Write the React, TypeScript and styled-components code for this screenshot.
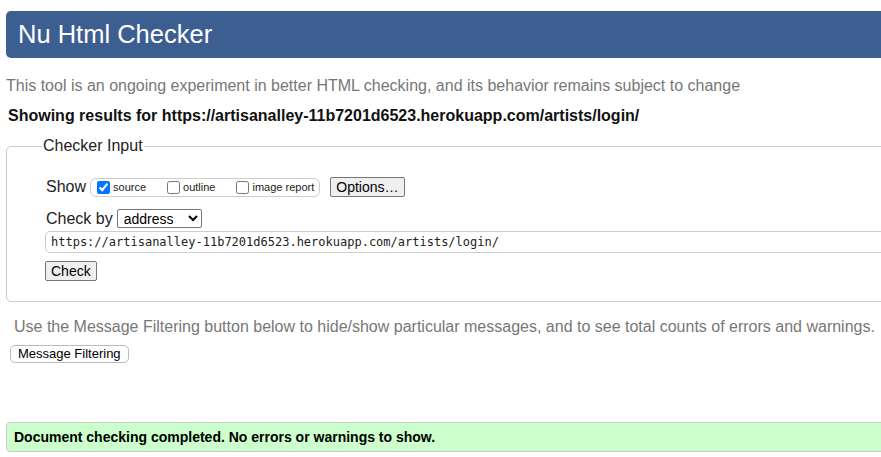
import React from 'react'
import styled, { createGlobalStyle } from 'styled-components'

const GlobalStyle = createGlobalStyle`
  html, body {
    margin: 0;
    padding: 0;
    background: #fff;
    overflow: hidden;
  }
  body {
    font-family: "Liberation Sans", Arial, sans-serif;
    color: #000;
  }
`

const Page = styled.div`
  width: 1000px;
  padding: 11px 0 0 6px;
`

const Header = styled.h1`
  margin: 0;
  height: 47px;
  display: flex;
  align-items: center;
  padding-left: 12px;
  background: #3d5e91;
  color: #fff;
  font-size: 25.5px;
  font-weight: 400;
  border-radius: 5px 0 0 5px;
`

const Intro = styled.p`
  margin: 19px 0 0 0;
  font-size: 16px;
  line-height: 18px;
  color: #777;
`

const Results = styled.p`
  margin: 12px 0 0 2px;
  font-size: 16px;
  line-height: 18px;
  font-weight: 700;
  color: #111;
`

const Fieldset = styled.fieldset`
  margin: 12px 0 0 0;
  padding: 22px 0 20px 39px;
  border: 1px solid #ccc;
  border-radius: 5px;
  min-height: 0;
`

const Legend = styled.legend`
  margin-left: -4px;
  padding: 0 1px;
  font-size: 16px;
  color: #222;
`

const Row = styled.div<{ $gap?: number }>`
  display: flex;
  align-items: center;
  margin-bottom: ${p => p.$gap ?? 0}px;
`

const RowLabel = styled.span`
  font-size: 16px;
  margin-right: 4px;
  color: #222;
`

const CheckGroup = styled.span`
  display: inline-flex;
  align-items: center;
  height: 17px;
  padding: 0 5px 0 6px;
  border: 1px solid #ccc;
  border-radius: 6px;
  gap: 21px;
`

const CheckItem = styled.label`
  display: inline-flex;
  align-items: center;
  font-size: 11px;
  color: #222;
  input {
    margin: 0 3px 0 0;
    width: 13px;
    height: 13px;
  }
`

const Button = styled.button<{ $soft?: boolean }>`
  font-family: "Liberation Sans", Arial, sans-serif;
  font-size: ${p => (p.$soft ? 13 : 14)}px;
  color: #000;
  background: ${p => (p.$soft ? '#fff' : '#efefef')};
  border: 1px solid ${p => (p.$soft ? '#bbb' : '#767676')};
  border-radius: ${p => (p.$soft ? 5 : 2)}px;
  padding: 0 ${p => (p.$soft ? 7 : 5)}px;
  height: ${p => (p.$soft ? 18 : 20)}px;
  line-height: 1;
`

const Select = styled.select`
  font-family: "Liberation Sans", Arial, sans-serif;
  font-size: 14px;
  height: 19px;
  width: 85px;
  padding: 0 2px;
  border: 1px solid #767676;
  border-radius: 2px;
  background: #fff;
  color: #000;
`

const UrlInput = styled.input`
  display: block;
  box-sizing: border-box;
  width: 100%;
  height: 22px;
  margin: 0 0 8px -1px;
  padding: 0 5px;
  font-family: "DejaVu Sans Mono", monospace;
  font-size: 12px;
  color: #222;
  border: 1px solid #ccc;
  border-radius: 5px;
  background: #fff;
`

const FilterNote = styled.p`
  margin: 16px 0 0 8px;
  font-size: 16px;
  line-height: 18px;
  color: #777;
`

const FilterRow = styled.div`
  margin: 8px 0 0 4px;
`

const Success = styled.div`
  margin-top: 59px;
  height: 28px;
  display: flex;
  align-items: center;
  padding-left: 7px;
  background: #ccffcc;
  border: 1px solid #ccc;
  border-radius: 4px 0 0 4px;
  font-size: 14px;
  font-weight: 700;
  color: #000;
`

export default function App() {
  const url = 'https://artisanalley-11b7201d6523.herokuapp.com/artists/login/'
  return (
    <>
      <GlobalStyle />
      <Page>
        <Header>Nu Html Checker</Header>
        <Intro>This tool is an ongoing experiment in better HTML checking, and its behavior remains subject to change</Intro>
        <Results>Showing results for {url}</Results>
        <Fieldset>
          <Legend>Checker Input</Legend>
          <Row $gap={12}>
            <RowLabel>Show</RowLabel>
            <CheckGroup>
              <CheckItem><input type="checkbox" defaultChecked />source</CheckItem>
              <CheckItem><input type="checkbox" />outline</CheckItem>
              <CheckItem><input type="checkbox" />image report</CheckItem>
            </CheckGroup>
            <Button style={{ marginLeft: 10 }}>Options…</Button>
          </Row>
          <Row $gap={3}>
            <RowLabel>Check by</RowLabel>
            <Select defaultValue="address">
              <option value="address">address</option>
              <option value="upload">file upload</option>
              <option value="text">text input</option>
            </Select>
          </Row>
          <UrlInput defaultValue={url} />
          <Button style={{ marginLeft: -1 }}>Check</Button>
        </Fieldset>
        <FilterNote>Use the Message Filtering button below to hide/show particular messages, and to see total counts of errors and warnings.</FilterNote>
        <FilterRow>
          <Button $soft>Message Filtering</Button>
        </FilterRow>
        <Success>Document checking completed. No errors or warnings to show.</Success>
      </Page>
    </>
  )
}
